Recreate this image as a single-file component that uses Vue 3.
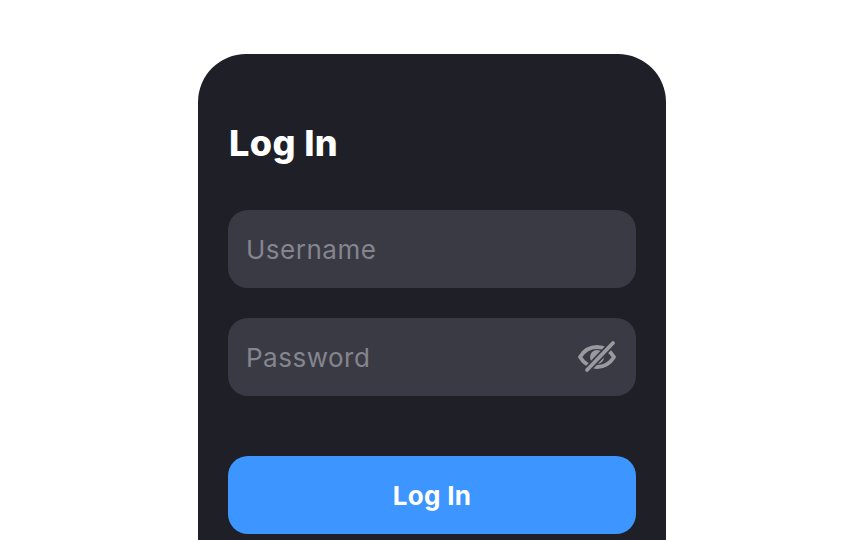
<template>
  <div class="page">
    <form class="card" @submit.prevent>
      <h1 class="card__title">Log In</h1>

      <div class="field">
        <span class="field__placeholder">Username</span>
      </div>

      <div class="field field--password">
        <span class="field__placeholder">Password</span>
        <svg class="field__eye" width="38" height="36" viewBox="0 0 38 36" fill="none">
          <!-- eye outline -->
          <path d="M2 18C6 11.5 12 8 19 8C26 8 32 11.5 36 18C32 24.5 26 28 19 28C12 28 6 24.5 2 18Z" stroke="#99999F" stroke-width="3.8" stroke-linejoin="round" />
          <circle cx="19" cy="18" r="7" fill="#99999F" />
          <!-- gap + slash -->
          <path d="M9 31L35 4" stroke="#3A3A44" stroke-width="7" />
          <path d="M9 31L35 4" stroke="#99999F" stroke-width="3.8" stroke-linecap="round" />
        </svg>
      </div>

      <button class="submit" type="submit">Log In</button>
    </form>
  </div>
</template>

<script setup>
</script>

<style scoped>
.page {
  width: 864px;
  height: 540px;
  overflow: hidden;
  background: #FFFFFF;
  display: flex;
  justify-content: center;
  padding-top: 54px;
  box-sizing: border-box;
  font-family: Inter, 'Liberation Sans', sans-serif;
}
.card {
  width: 468px;
  height: 540px;
  flex: none;
  background: #1E1F27;
  border-radius: 48px;
  padding: 66px 30px 0;
  box-sizing: border-box;
}
.card__title {
  margin: 0 0 44px;
  padding-left: 1px;
  font-size: 36px;
  line-height: 46px;
  font-weight: 800;
  letter-spacing: 0.4px;
  color: #FFFFFF;
}
.field {
  height: 78px;
  background: #3A3A44;
  border-radius: 20px;
  margin-bottom: 30px;
  padding: 0 20px 0 18px;
  display: flex;
  align-items: center;
  justify-content: space-between;
}
.field__placeholder {
  font-size: 26px;
  letter-spacing: 0.5px;
  color: #85858E;
}
.field__eye {
  flex: none;
}
.submit {
  display: block;
  width: 100%;
  height: 78px;
  margin-top: 60px;
  border: 0;
  border-radius: 20px;
  background: #3D96FF;
  color: #FFFFFF;
  font-family: inherit;
  font-size: 26px;
  font-weight: 700;
  letter-spacing: 0.3px;
}
</style>
